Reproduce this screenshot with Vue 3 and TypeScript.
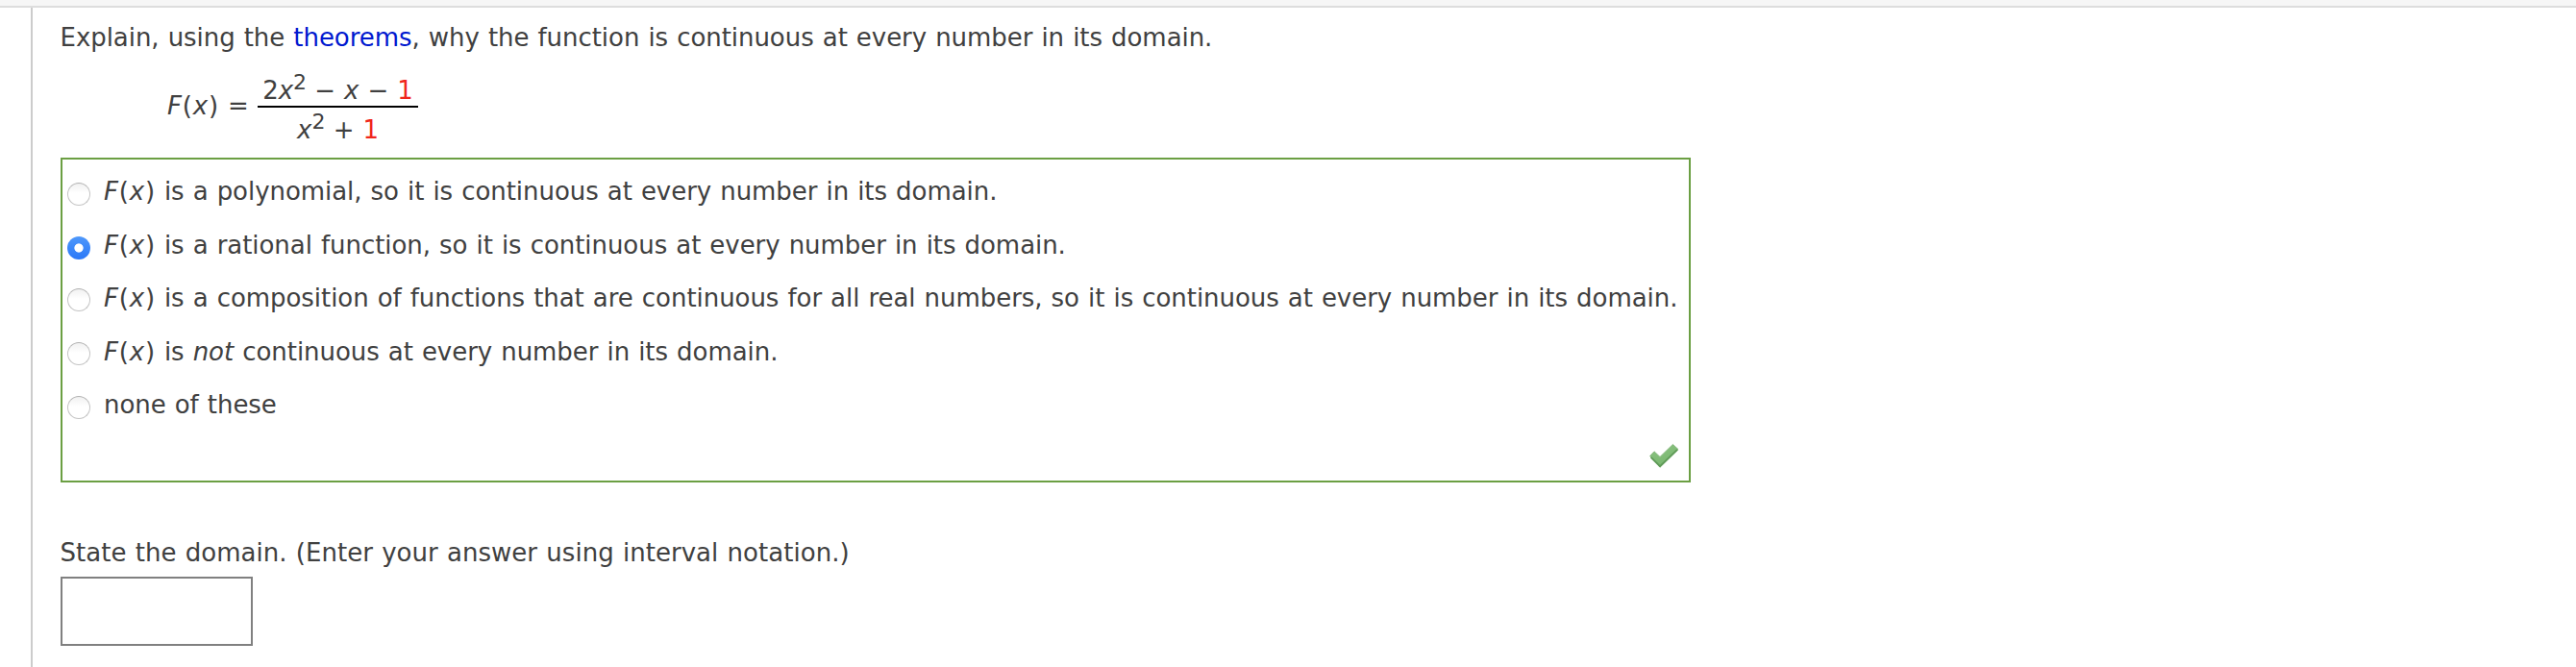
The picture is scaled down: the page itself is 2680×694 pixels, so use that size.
<script setup lang="ts">
import { ref } from 'vue'

interface Option {
  id: string
  math: boolean
  before: string
  emphasis?: string
  after?: string
}

const options: Option[] = [
  { id: 'polynomial', math: true, before: ' is a polynomial, so it is continuous at every number in its domain.' },
  { id: 'rational', math: true, before: ' is a rational function, so it is continuous at every number in its domain.' },
  { id: 'composition', math: true, before: ' is a composition of functions that are continuous for all real numbers, so it is continuous at every number in its domain.' },
  { id: 'not', math: true, before: ' is ', emphasis: 'not', after: ' continuous at every number in its domain.' },
  { id: 'none', math: false, before: 'none of these' },
]

const selected = ref('rational')
const answer = ref('')
</script>

<template>
  <div class="page">
    <header class="topbar"></header>
    <main class="question">
      <p class="line">Explain, using the <a class="link">theorems</a>, why the function is continuous at every number in its domain.</p>

      <div class="formula">
        <div class="lhs"><i>F</i><span class="paren">(</span><i>x</i><span class="paren">)</span> =</div>
        <div class="fraction">
          <div class="numerator">2<i>x</i><sup>2</sup> − <i>x</i> − <span class="value">1</span></div>
          <div class="denominator"><i>x</i><sup>2</sup> + <span class="value">1</span></div>
        </div>
      </div>

      <section class="choices">
        <label v-for="o in options" :key="o.id" class="choice">
          <input v-model="selected" class="radio" type="radio" name="reason" :value="o.id" />
          <span class="text"><template v-if="o.math"><i>F</i><span class="paren">(</span><i>x</i><span class="paren">)</span></template>{{ o.before }}<i v-if="o.emphasis">{{ o.emphasis }}</i>{{ o.after }}</span>
        </label>
        <svg class="check" width="32" height="28" viewBox="0 0 32 28">
          <defs>
            <linearGradient id="tick" x1="0" y1="0" x2="0.5" y2="1">
              <stop offset="0" stop-color="#8cc383" />
              <stop offset="1" stop-color="#78b66e" />
            </linearGradient>
          </defs>
          <path d="M1.6 14.4 6 9.8 12 15.4 25.4 2.4 31 7.6 12 26.2Z" fill="url(#tick)" stroke="#86b97e" stroke-width="1" stroke-linejoin="round" />
          <path d="M2.6 15.8 12 25.2 30 7.8" fill="none" stroke="#5f9a58" stroke-width="1.8" stroke-linejoin="round" />
        </svg>
      </section>

      <p class="line domain">State the domain. (Enter your answer using interval notation.)</p>
      <input v-model="answer" class="answer" type="text" aria-label="Domain" />
    </main>
  </div>
</template>

<style>
body {
  margin: 0;
  background: #fff;
}
</style>

<style scoped>
.page {
  display: flex;
  flex-direction: column;
  height: 694px;
  overflow: hidden;
  font: 26px/36px Verdana, "DejaVu Sans", sans-serif;
  letter-spacing: -0.05px;
  word-spacing: 0.88px;
  color: #404040;
}
.topbar {
  flex: none;
  height: 6px;
  background: #f6f6f6;
  border-bottom: 2px solid #ddd;
}
.question {
  flex: 1;
  margin-left: 32px;
  padding: 13px 0 0 29px;
  border-left: 2px solid #ccc;
}
.line {
  margin: 0 0 0 -0.5px;
  white-space: nowrap;
}
.link {
  color: #0018cf;
  cursor: pointer;
}
.formula {
  display: flex;
  align-items: flex-start;
  gap: 9px;
  height: 77px;
  margin: 19px 0 11px 111px;
  white-space: nowrap;
}
.lhs {
  margin-top: 16px;
  width: 85px;
}
.paren {
  padding: 0 0.85px;
}
.fraction {
  width: 167px;
  text-align: center;
}
.numerator {
  height: 34px;
  border-bottom: 2px solid #000;
}
.denominator {
  margin-top: 5px;
}
sup {
  margin-right: -0.8px;
  font-size: 22px;
  line-height: 0;
  vertical-align: 10.5px;
}
.value {
  color: #f0261c;
}
.choices {
  display: flex;
  flex-direction: column;
  box-sizing: border-box;
  width: 1696px;
  height: 338px;
  padding: 15px 10px 12px 5px;
  border: 2px solid #6b9f43;
}
.choice {
  display: flex;
  align-items: flex-start;
  gap: 14px;
  height: 55px;
  white-space: nowrap;
}
.choice:nth-child(odd) {
  height: 56px;
}
.text {
  white-space: pre;
}
.radio {
  appearance: none;
  flex: none;
  box-sizing: border-box;
  width: 24px;
  height: 24px;
  margin: 9px 0 0;
  border: 1px solid #c4c4c4;
  border-top-color: #b2b2b2;
  border-radius: 50%;
  background: linear-gradient(#f1f1f1, #fff 45%);
}
.choice:nth-child(3) .radio,
.choice:nth-child(4) .radio {
  margin-top: 8px;
}
.radio:checked {
  border: 0;
  background:
    radial-gradient(circle at center, #fff 4.2px, transparent 5px),
    linear-gradient(#4e98fb, #2b78f7);
}
.check {
  margin: auto 0 0 auto;
}
.domain {
  margin-top: 55px;
  letter-spacing: 0.04px;
}
.answer {
  display: block;
  box-sizing: border-box;
  width: 200px;
  height: 72px;
  margin: 7px 0 0;
  padding: 0 10px;
  border: 2px solid #808080;
  background: #fff;
  font: inherit;
  color: inherit;
  outline: none;
}
</style>
